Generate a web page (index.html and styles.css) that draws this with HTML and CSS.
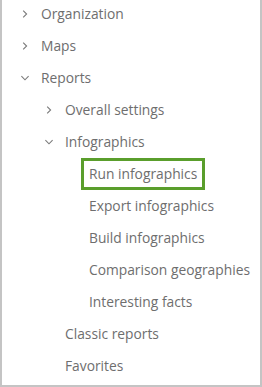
FILE: index.html
```html
<!DOCTYPE html>
<html lang="en">
<head>
    <meta charset="UTF-8">
    <title>Reports menu</title>
    <link rel="stylesheet" href="styles.css">
</head>
<body>
    <div class="panel">
        <ul class="tree">
            <li class="row level-1">
                <span class="chev"><svg width="8" height="8" viewBox="0 0 8 8"><path d="M2.2 0.6 L5.6 4 L2.2 7.4" /></svg></span>
                <span class="label">Organization</span>
            </li>
            <li class="row level-1">
                <span class="chev"><svg width="8" height="8" viewBox="0 0 8 8"><path d="M2.2 0.6 L5.6 4 L2.2 7.4" /></svg></span>
                <span class="label">Maps</span>
            </li>
            <li class="row level-1">
                <span class="chev"><svg width="8" height="8" viewBox="0 0 8 8"><path d="M0.4 2.2 L4 5.8 L7.6 2.2" /></svg></span>
                <span class="label">Reports</span>
            </li>
            <li class="row level-2">
                <span class="chev"><svg width="8" height="8" viewBox="0 0 8 8"><path d="M2.2 0.6 L5.6 4 L2.2 7.4" /></svg></span>
                <span class="label">Overall settings</span>
            </li>
            <li class="row level-2">
                <span class="chev"><svg width="8" height="8" viewBox="0 0 8 8"><path d="M0.4 2.2 L4 5.8 L7.6 2.2" /></svg></span>
                <span class="label">Infographics</span>
            </li>
            <li class="row level-3">
                <span class="label selected">Run infographics</span>
            </li>
            <li class="row level-3">
                <span class="label">Export infographics</span>
            </li>
            <li class="row level-3">
                <span class="label">Build infographics</span>
            </li>
            <li class="row level-3">
                <span class="label">Comparison geographies</span>
            </li>
            <li class="row level-3">
                <span class="label">Interesting facts</span>
            </li>
            <li class="row level-2 leaf">
                <span class="label">Classic reports</span>
            </li>
            <li class="row level-2 leaf">
                <span class="label">Favorites</span>
            </li>
        </ul>
    </div>
</body>
</html>
```

FILE: styles.css
```css
html, body {
    margin: 0;
    padding: 0;
    background: #ffffff;
}

body {
    font-family: 'Open Sans', 'Noto Sans', sans-serif;
    font-size: 13.8px;
    color: #6e6e6e;
}

.panel {
    width: 262px;
    height: 387px;
    box-sizing: border-box;
    border: 2px solid #c4c4c4;
    border-top: none;
    overflow: hidden;
}

.tree {
    list-style: none;
    margin: -2px 0 0 0;
    padding: 0;
}

.row {
    display: flex;
    align-items: center;
    height: 32px;
}

.level-1 {
    padding-left: 15px;
}

.level-2 {
    padding-left: 39px;
}

.level-3 {
    padding-left: 79px;
}

.leaf {
    padding-left: 63px;
}

.chev {
    width: 16px;
    height: 16px;
    display: flex;
    align-items: center;
    justify-content: center;
    margin-right: 8px;
}

.chev svg {
    fill: none;
    stroke: #7a7a7a;
    stroke-width: 1.1;
}

.label {
    white-space: nowrap;
    padding-bottom: 2px;
}

.level-3 .label {
    box-sizing: border-box;
    height: 32px;
    display: flex;
    align-items: center;
    padding: 0 5px 2px 5px;
    border: 3px solid transparent;
}

.level-3 .label.selected {
    border-color: #5a9e2c;
}
```
